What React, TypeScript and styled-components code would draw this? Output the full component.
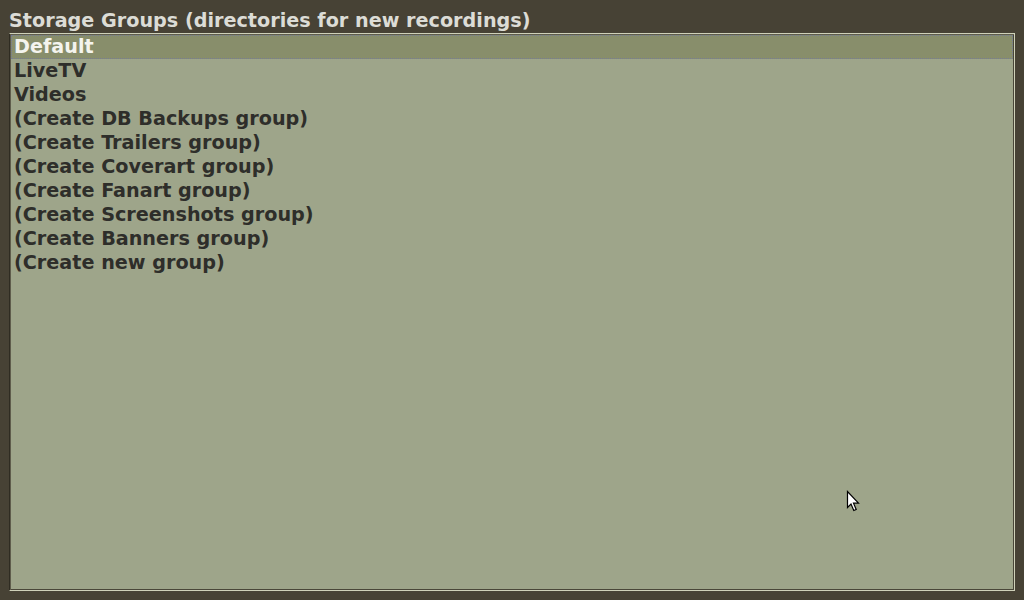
import React, {FC} from 'react';
import styled, {createGlobalStyle} from 'styled-components';

const Global = createGlobalStyle`
    html, body {
        margin: 0;
        padding: 0;
        background: #474235;
        font-family: "DejaVu Sans", "Liberation Sans", sans-serif;
    }
`;

const Screen = styled.div`
    width: 1024px;
    height: 600px;
    position: relative;
    overflow: hidden;
    display: flex;
    flex-direction: column;
`;

const Title = styled.div`
    height: 33px;
    padding: 0 9px;
    box-sizing: border-box;
    display: flex;
    align-items: flex-end;
    padding-bottom: 1px;
    font-size: 19.2px;
    font-weight: bold;
    color: #dcdcd6;
`;

const Panel = styled.div`
    margin: 0 9px;
    height: 558px;
    box-sizing: border-box;
    background: #9ea58a;
    border: 1px solid #cfd1b9;
    border-left-color: #2f2c22;
    box-shadow: inset 1px 1px 0 #5f5d4c, inset -1px -1px 0 #4a4739;
    padding: 1px 1px;
    display: flex;
    flex-direction: column;
`;

const Row = styled.div<{$selected?: boolean}>`
    height: 24px;
    box-sizing: border-box;
    padding: 0 3px 1px;
    display: flex;
    align-items: center;
    font-size: 19.2px;
    font-weight: bold;
    white-space: nowrap;
    color: ${p => p.$selected ? '#f4f4ee' : '#2e2e2a'};
    background: ${p => p.$selected ? '#888e6b' : 'transparent'};
    outline: ${p => p.$selected ? '1px dotted #767c96' : 'none'};
    outline-offset: -1px;
`;

const Pointer = styled.svg`
    position: absolute;
    left: 846px;
    top: 490px;
`;

const items = [
    'Default',
    'LiveTV',
    'Videos',
    '(Create DB Backups group)',
    '(Create Trailers group)',
    '(Create Coverart group)',
    '(Create Fanart group)',
    '(Create Screenshots group)',
    '(Create Banners group)',
    '(Create new group)',
];

const App: FC = () => {
    return (
        <Screen>
            <Global />
            <Title>Storage Groups (directories for new recordings)</Title>
            <Panel>
                {items.map((name, i) => (
                    <Row key={name} $selected={i === 0}>{name}</Row>
                ))}
            </Panel>
            <Pointer width="16" height="24" viewBox="0 0 16 24">
                <path d="M1.5 1.5 L1.5 17.5 L5 14 L7.8 20.5 L10.2 19.5 L7.5 13.2 L12.5 13.2 Z"
                      fill="#ffffff" stroke="#000000" strokeWidth="1.2" strokeLinejoin="miter" />
            </Pointer>
        </Screen>
    )
}

export default App;
